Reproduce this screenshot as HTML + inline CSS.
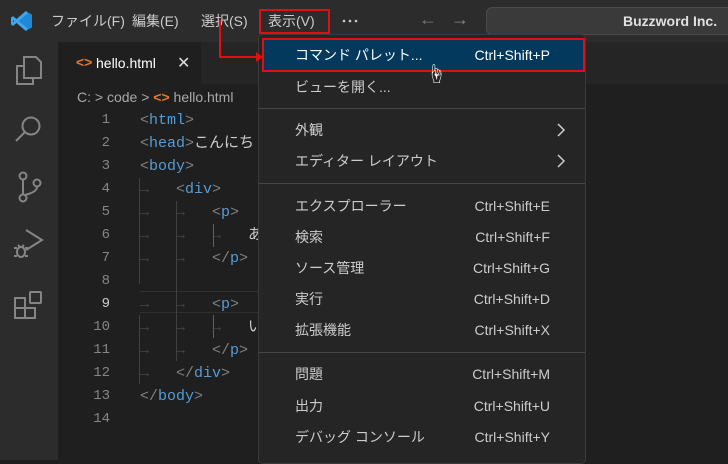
<!DOCTYPE html>
<html><head><meta charset="utf-8"><style>
*{margin:0;padding:0;box-sizing:border-box}
body{width:728px;height:460px;overflow:hidden;background:#1f1f1f;font-family:"Liberation Sans","Noto Sans CJK JP",sans-serif;color:#ccc;position:relative}
.abs{position:absolute}
.title{left:0;top:0;width:728px;height:42px;background:#2c2c2c}
.menu{top:11px;font-size:14px;line-height:20px;color:#ccc}
.act{left:0;top:42px;width:58px;height:418px;background:#2c2c2c}
.tabs{left:58px;top:42px;width:670px;height:42px;background:#252525}
.tab{left:58px;top:42px;width:143px;height:42px;background:#1f1f1f}
.ln{left:70px;width:40px;text-align:right;font-family:"Liberation Mono",monospace;font-size:14px;line-height:20px;color:#858585}
.code{font-family:"Liberation Mono","Noto Sans CJK JP",monospace;font-size:15px;color:#808080;white-space:pre}
.t{color:#569cd6}
.dd{left:258px;top:34px;width:328px;height:430px;background:#252526;border:1px solid #3a3a3a;border-radius:5px}
.it{left:295px;font-size:14px;line-height:20px;color:#ccc}
.sc{right:178px;font-size:14px;line-height:20px;color:#ccc}
.sep{left:259px;width:326px;height:1px;background:#454545}
.guide{width:1px;background:#404040}
</style></head><body>
<div class="abs title"></div>
<svg class="abs" style="left:11px;top:11px" width="22" height="20" viewBox="0 0 22 20"><path d="M16 1 L21 3.5 V16.5 L16 19 L6 10 Z" fill="#1e8ad6"/><path d="M16 1 L2 13 L0.5 12 V8 L2 7 L16 19" fill="none" stroke="#3ea7f0" stroke-width="3"/></svg>
<div class="abs menu" style="left:51px">ファイル(F)</div>
<div class="abs menu" style="left:132px">編集(E)</div>
<div class="abs menu" style="left:201px">選択(S)</div>
<div class="abs menu" style="left:268px">表示(V)</div>
<div class="abs" style="left:259px;top:9px;width:71px;height:25px;border:2px solid #e01010"></div>
<svg class="abs" style="left:342px;top:19px" width="16" height="4"><circle cx="2" cy="2" r="1.3" fill="#ccc"/><circle cx="8" cy="2" r="1.3" fill="#ccc"/><circle cx="14" cy="2" r="1.3" fill="#ccc"/></svg>
<div class="abs" style="left:419px;top:9px;font-size:18px;color:#777">←</div>
<div class="abs" style="left:451px;top:9px;font-size:18px;color:#888">→</div>
<div class="abs" style="left:486px;top:7px;width:260px;height:28px;background:#3a3a3a;border:1px solid #4a4a4a;border-radius:6px"></div>
<div class="abs" style="left:623px;top:13px;font-size:14px;color:#e0e0e0;font-weight:bold">Buzzword Inc.</div>
<div class="abs act"></div>
<svg class="abs" style="left:0;top:40px" width="58" height="290" viewBox="0 0 58 290" fill="none" stroke="#858585" stroke-width="2">
<path d="M24 17 H36 L41 22 V38 H24 Z"/><path d="M24 26 H17 V44 H33 V38"/>
<circle cx="31" cy="86" r="8.5"/><path d="M25 92 L16 101"/>
<circle cx="23" cy="136" r="3.5"/><circle cx="23" cy="158" r="3.5"/><circle cx="37" cy="143" r="3.5"/><path d="M23 140 V154 M37 147 Q37 152 25 155"/>
<path d="M26 190 L42 200 L26 210"/><ellipse cx="21" cy="212" rx="4" ry="5"/><path d="M14 208 h3 M25 208 h3 M14 216 h3 M25 216 h3 M18 205 l2 2 M24 205 l-2 2"/>
<path d="M15 258 H25 V268 H15 Z M15 268 H25 V278 H15 Z M25 268 H35 V278 H25 Z"/><rect x="30" y="252" width="11" height="11" rx="1"/>
</svg>
<div class="abs tabs"></div>
<div class="abs tab"></div>
<div class="abs" style="left:76px;top:54px;font-size:14px;color:#e37933;font-weight:bold">&lt;&gt;</div>
<div class="abs" style="left:96px;top:55px;font-size:14px;color:#fff">hello.html</div>
<div class="abs" style="left:177px;top:53px;font-size:16px;color:#ddd">✕</div>
<div class="abs" style="left:77px;top:89px;font-size:14px;color:#a9a9a9">C: &gt; code &gt; <span style="color:#e37933;font-weight:bold">&lt;&gt;</span> hello.html</div>
<div class="abs" style="left:140px;top:291px;width:120px;height:22px;border-top:1px solid #303030;border-bottom:1px solid #303030"></div>
<div class="abs guide" style="left:139px;top:178px;height:106px"></div>
<div class="abs guide" style="left:176px;top:201px;height:160px"></div>
<div class="abs guide" style="left:213px;top:224px;height:23px;background:#606060"></div>
<div class="abs guide" style="left:213px;top:315px;height:23px;background:#606060"></div>
<div class="abs guide" style="left:139px;top:315px;height:69px"></div>
<div class="abs ln" style="top:110px">1</div><div class="abs ln" style="top:133px">2</div><div class="abs ln" style="top:156px">3</div><div class="abs ln" style="top:179px">4</div><div class="abs ln" style="top:202px">5</div><div class="abs ln" style="top:225px">6</div><div class="abs ln" style="top:248px">7</div><div class="abs ln" style="top:271px">8</div><div class="abs ln" style="top:294px;color:#ccc">9</div><div class="abs ln" style="top:317px">10</div><div class="abs ln" style="top:340px">11</div><div class="abs ln" style="top:363px">12</div><div class="abs ln" style="top:386px">13</div><div class="abs ln" style="top:409px">14</div>
<div class="abs code" style="left:140px;top:109px;line-height:23px">&lt;<span class="t">html</span>&gt;
&lt;<span class="t">head</span>&gt;<span style="color:#ccc">こんにち</span>
&lt;<span class="t">body</span>&gt;
<span style="color:#444">→</span>   &lt;<span class="t">div</span>&gt;
<span style="color:#444">→   →</span>   &lt;<span class="t">p</span>&gt;
<span style="color:#444">→   →   →</span>   <span style="color:#ccc">あ</span>
<span style="color:#444">→   →</span>   &lt;/<span class="t">p</span>&gt;

<span style="color:#444">→   →</span>   &lt;<span class="t">p</span>&gt;
<span style="color:#444">→   →   →</span>   <span style="color:#ccc">い</span>
<span style="color:#444">→   →</span>   &lt;/<span class="t">p</span>&gt;
<span style="color:#444">→</span>   &lt;/<span class="t">div</span>&gt;
&lt;/<span class="t">body</span>&gt;</div>
<div class="abs dd"></div>
<div class="abs" style="left:262px;top:38px;width:323px;height:34px;background:#04395e;border:2px solid #e01010"></div>
<svg class="abs" style="left:218px;top:20px" width="46" height="45"><path d="M2 0 V37 H40" fill="none" stroke="#e01010" stroke-width="2"/><path d="M38 32 L45 37 L38 42 Z" fill="#e01010"/></svg>
<div class="abs it" style="top:45px;color:#fff">コマンド パレット...</div><div class="abs sc" style="top:45px;color:#fff">Ctrl+Shift+P</div>
<div class="abs" style="left:426px;top:58px;font-size:20px;color:#fff">☝</div>
<div class="abs it" style="top:77px">ビューを開く...</div>
<div class="abs sep" style="top:108px"></div>
<div class="abs it" style="top:120px">外観</div>
<svg class="abs" style="left:556px;top:123px" width="10" height="14"><path d="M2 1 L8 7 L2 13" fill="none" stroke="#ccc" stroke-width="1.5"/></svg>
<div class="abs it" style="top:151px">エディター レイアウト</div>
<svg class="abs" style="left:556px;top:154px" width="10" height="14"><path d="M2 1 L8 7 L2 13" fill="none" stroke="#ccc" stroke-width="1.5"/></svg>
<div class="abs sep" style="top:183px"></div>
<div class="abs it" style="top:196px">エクスプローラー</div><div class="abs sc" style="top:196px">Ctrl+Shift+E</div>
<div class="abs it" style="top:227px">検索</div><div class="abs sc" style="top:227px">Ctrl+Shift+F</div>
<div class="abs it" style="top:258px">ソース管理</div><div class="abs sc" style="top:258px">Ctrl+Shift+G</div>
<div class="abs it" style="top:289px">実行</div><div class="abs sc" style="top:289px">Ctrl+Shift+D</div>
<div class="abs it" style="top:320px">拡張機能</div><div class="abs sc" style="top:320px">Ctrl+Shift+X</div>
<div class="abs sep" style="top:352px"></div>
<div class="abs it" style="top:364px">問題</div><div class="abs sc" style="top:364px">Ctrl+Shift+M</div>
<div class="abs it" style="top:396px">出力</div><div class="abs sc" style="top:396px">Ctrl+Shift+U</div>
<div class="abs it" style="top:427px">デバッグ コンソール</div><div class="abs sc" style="top:427px">Ctrl+Shift+Y</div>
</body></html>
